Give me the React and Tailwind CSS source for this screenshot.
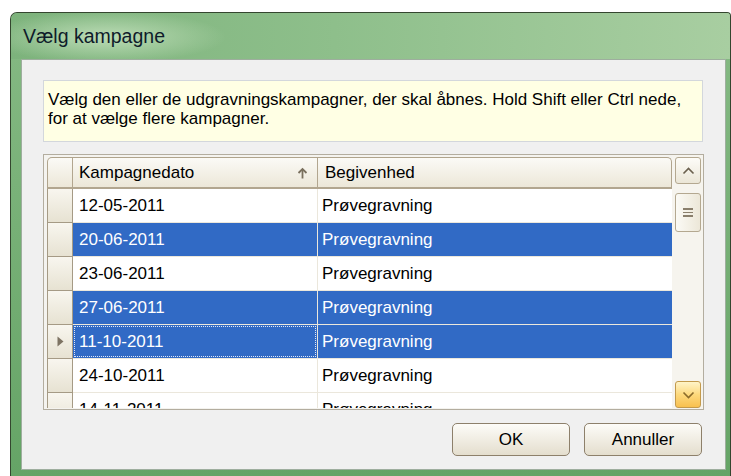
import React from "react";

const rows = [
  { date: "12-05-2011", sel: false },
  { date: "20-06-2011", sel: true },
  { date: "23-06-2011", sel: false },
  { date: "27-06-2011", sel: true },
  { date: "11-10-2011", sel: true, current: true },
  { date: "24-10-2011", sel: false },
  { date: "14-11-2011", sel: false },
];

function Chevron({ up, color }) {
  return (
    <svg width="13" height="8" viewBox="0 0 13 8">
      <polyline
        points={up ? "1.5,6.5 6.5,1.5 11.5,6.5" : "1.5,1.5 6.5,6.5 11.5,1.5"}
        fill="none"
        stroke={color}
        strokeWidth="1.6"
      />
    </svg>
  );
}

function SortArrow() {
  return (
    <svg width="11" height="12" viewBox="0 0 11 12">
      <line x1="5.5" y1="2" x2="5.5" y2="11.5" stroke="#7a705e" strokeWidth="1.8" />
      <polyline points="1.5,6 5.5,2 9.5,6" fill="none" stroke="#7a705e" strokeWidth="1.8" />
    </svg>
  );
}

function RowPointer() {
  return (
    <svg width="7" height="11" viewBox="0 0 7 11">
      <polygon points="0.5,0.5 6.5,5.5 0.5,10.5" fill="#7d7363" />
    </svg>
  );
}

function Row({ date, sel, current }) {
  const cellTone = sel ? "bg-[#316ac5] text-white" : "bg-white text-black";
  return (
    <div className="flex h-[34px] shrink-0">
      <div className="w-[26px] shrink-0 border-l border-r border-b border-[#a59a85] bg-gradient-to-b from-[#f8f6ef] to-[#e7e2d2] flex items-center justify-center">
        {current && <RowPointer />}
      </div>
      <div className={`w-[245px] shrink-0 border-r border-b border-[#ebe7dc] flex ${cellTone}`}>
        {current ? (
          <div className="flex-1 m-[1px] border border-dotted border-[#dfe6f5] flex items-center pl-[4px]">
            {date}
          </div>
        ) : (
          <div className="flex-1 flex items-center pl-[6px]">{date}</div>
        )}
      </div>
      <div className={`flex-1 border-b border-[#ebe7dc] flex items-center pl-[4px] ${cellTone}`}>
        Prøvegravning
      </div>
    </div>
  );
}

function ScrollButton({ children, hot }) {
  return (
    <div
      className={`h-[27px] shrink-0 rounded-[3px] border flex items-center justify-center ${
        hot
          ? "border-[#c39a4c] bg-gradient-to-b from-[#fff4c8] via-[#fdd97c] to-[#f8c04e]"
          : "border-[#b4a890] bg-gradient-to-b from-[#fdfcf8] to-[#ebe6d7]"
      }`}
    >
      {children}
    </div>
  );
}

export default function App() {
  return (
    <div className="w-[731px] h-[476px] bg-white overflow-hidden font-['Liberation_Sans',Arial,sans-serif]">
      {/* window frame */}
      <div className="ml-[10px] mt-[12px] w-[721px] h-[464px] flex flex-col rounded-tl-[7px] rounded-tr-[4px] border border-b-0 border-[#34462f] bg-gradient-to-b from-[#86ba84] to-[#65a466] overflow-hidden">
        {/* caption */}
        <div className="h-[46px] shrink-0 flex items-center pl-[12px] pt-[1px] bg-[image:radial-gradient(ellipse_120px_26px_at_95px_24px,#bcdcb6_0%,rgba(188,220,182,0)_100%),linear-gradient(to_right,#7db37c,#8ebf8b_45%,#a8cea1)]">
          <span className="text-[19.5px] text-[#0f1c2a]">Vælg kampagne</span>
        </div>

        {/* client area */}
        <div className="flex-1 ml-[10px] mr-[4px] mb-[6px] border border-[#9eae9e] bg-[#f0f0f0] flex flex-col pl-[21px] pt-[20px] text-[17px]">
          {/* hint */}
          <div className="w-[660px] h-[62px] shrink-0 border border-[#d3d7dc] bg-[#ffffe4] px-[4px] pt-[9px] leading-[19px] text-black whitespace-nowrap">
            Vælg den eller de udgravningskampagner, der skal åbnes. Hold Shift eller Ctrl nede,
            <br />
            for at vælge flere kampagner.
          </div>

          {/* grid */}
          <div className="mt-[12px] w-[661px] h-[256px] shrink-0 border border-[#b3ad9f] bg-[#f4f3ef] flex">
            <div className="w-[628px] pl-[3px] pt-[2px] flex flex-col">
              <div className="h-[251px] flex flex-col overflow-hidden">
                {/* header */}
                <div className="flex h-[32px] shrink-0 rounded-t-[5px] border-l border-t border-r border-[#b0a48d] bg-gradient-to-b from-[#fbfaf6] to-[#ebe6d6] overflow-hidden">
                  <div className="w-[25px] shrink-0 border-r border-b-2 border-[#b2a68f]" />
                  <div className="w-[245px] shrink-0 border-r border-b-2 border-[#b2a68f] flex items-center justify-between pl-[6px] pr-[9px]">
                    <span>Kampagnedato</span>
                    <SortArrow />
                  </div>
                  <div className="flex-1 border-b-2 border-[#b2a68f] flex items-center pl-[7px]">
                    Begivenhed
                  </div>
                </div>
                {rows.map((r) => (
                  <Row key={r.date} {...r} />
                ))}
              </div>
            </div>

            {/* vertical scrollbar */}
            <div className="flex-1 flex flex-col pt-[2px] pb-[1px] pl-[3px] pr-[2px] bg-[#f6f4ee]">
              <ScrollButton>
                <Chevron up color="#6b604e" />
              </ScrollButton>
              <div className="mt-[9px] h-[39px] shrink-0 rounded-[3px] border border-[#b4a890] bg-gradient-to-r from-[#fbfaf5] to-[#ece7d8] flex flex-col items-center justify-center gap-[2px]">
                <div className="w-[10px] h-[1.5px] bg-[#8a7f6c]" />
                <div className="w-[10px] h-[1.5px] bg-[#8a7f6c]" />
                <div className="w-[10px] h-[1.5px] bg-[#8a7f6c]" />
              </div>
              <div className="flex-1" />
              <ScrollButton hot>
                <Chevron color="#8a6a2a" />
              </ScrollButton>
            </div>
          </div>

          {/* dialog buttons */}
          <div className="mt-[13px] w-[661px] flex justify-end gap-[14px] pr-[2px]">
            <button className="w-[118px] h-[33px] rounded-[5px] border border-[#8d806b] bg-gradient-to-b from-[#fdfcf8] to-[#e4dece] text-black">
              OK
            </button>
            <button className="w-[118px] h-[33px] rounded-[5px] border border-[#8d806b] bg-gradient-to-b from-[#fdfcf8] to-[#e4dece] text-black">
              Annuller
            </button>
          </div>
        </div>
      </div>
    </div>
  );
}
